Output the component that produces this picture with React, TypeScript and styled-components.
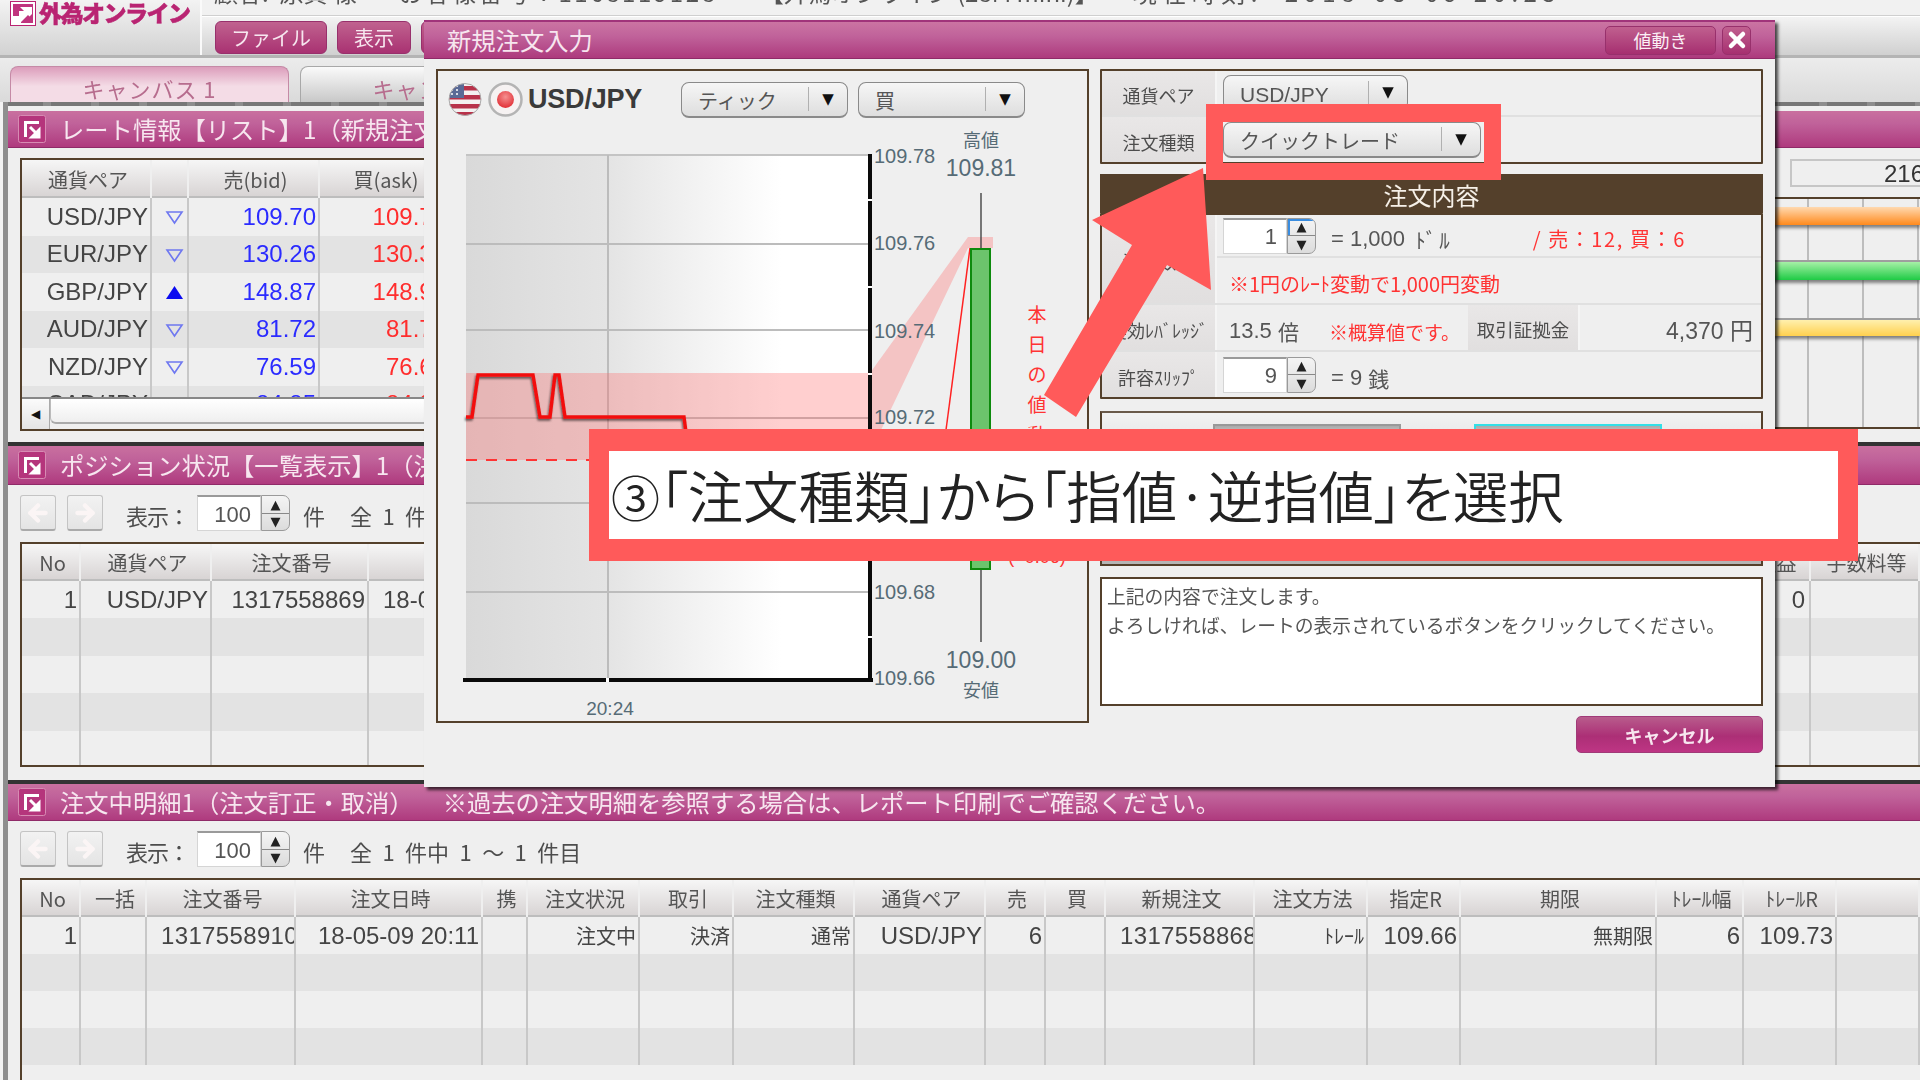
import React from "react";
import styled, { createGlobalStyle } from "styled-components";
import { ArrowLeft, ArrowRight, X } from "lucide-react";

const SANS = `"Liberation Sans", "Noto Sans CJK JP", sans-serif`;
const CJK = `"Noto Sans CJK JP", "Liberation Sans", sans-serif`;
const BROWN = "#54402b";

const Global = createGlobalStyle`
  html, body { margin: 0; padding: 0; background: #efefef; }
  * { box-sizing: border-box; }
  body { font-family: ${SANS}; color: #4a4a4a; }
`;

const Page = styled.div`
  position: relative;
  width: 1920px;
  height: 1080px;
  overflow: hidden;
  background: #efefef;
`;
const Screen = styled.div`
  position: relative;
  width: 1920px;
  height: 1080px;
  filter: blur(0.45px);
`;

/* ---------- header ---------- */
const TopBar = styled.header`
  display: grid;
  grid-template-columns: 202px 1fr;
  height: 58px;
  border-bottom: 3px solid #b4b4b4;
`;
const LogoCell = styled.div`
  display: flex;
  align-items: flex-start;
  gap: 3px;
  padding: 1px 0 0 10px;
  background: linear-gradient(#f3f3f3, #d2d2d2);
  border-right: 2px solid #fafafa;
`;
const LogoText = styled.span`
  font: 900 23px/23px ${CJK};
  color: #b92472;
  letter-spacing: -1.5px;
  -webkit-text-stroke: 0.5px #b92472;
`;
const HeaderRight = styled.div`
  display: flex;
  flex-direction: column;
`;
const InfoLine = styled.div`
  height: 16px;
  overflow: hidden;
  background: #f1f1f1;
  border-bottom: 1px solid #cfcfcf;
  padding-left: 12px;
`;
const InfoText = styled.div`
  display: flex;
  margin-top: -22px;
  font: 24px/28px ${CJK};
  color: #555;
  white-space: pre;
  gap: 42px;
`;
const InfoItem = styled.span<{ $track?: number; $left?: number }>`
  letter-spacing: ${(p) => p.$track ?? 0}px;
  margin-left: ${(p) => p.$left ?? 0}px;
`;
const MenuRow = styled.nav`
  flex: 1;
  display: flex;
  gap: 10px;
  padding: 4px 0 0 13px;
  background: linear-gradient(#f3f3f3, #d0d0d0);
  border-top: 1px solid #fff;
`;
const MenuButton = styled.button<{ $w: number }>`
  width: ${(p) => p.$w}px;
  height: 33px;
  padding: 0;
  border: 1px solid #98306c;
  border-radius: 6px;
  background: linear-gradient(#c0628f, #a93272);
  color: #f7e7ef;
  font: 20px/30px ${CJK};
`;

/* ---------- tabs ---------- */
const TabRow = styled.div`
  display: flex;
  align-items: flex-end;
  gap: 11px;
  height: 44px;
  padding-left: 10px;
  background: linear-gradient(#ececec, #dadada);
`;
const Tab = styled.div<{ $active?: boolean }>`
  width: 279px;
  height: 36px;
  border: 1px solid ${(p) => (p.$active ? "#c58aa6" : "#a8a8a8")};
  border-bottom: 0;
  border-radius: 8px 8px 0 0;
  background: ${(p) =>
    p.$active ? "linear-gradient(#dc9dbb, #f4dce6 55%)" : "linear-gradient(#fafafa, #c8c8c8)"};
  color: #b76d8e;
  font: 22px/42px ${CJK};
  text-align: center;
  letter-spacing: 1px;
`;

/* ---------- canvas and panels ---------- */
const Canvas = styled.main`
  height: 978px;
  padding: 9px 0 0 5px;
  background: #efefef;
  border-left: 3px solid #f3f3f3;
  box-shadow: inset 5px 0 0 #8e8e8e;
  background-image: repeating-linear-gradient(90deg, #777 0 40px, #8d8d8d 40px 48px);
  background-size: 100% 4px;
  background-repeat: no-repeat;
`;
const Panel = styled.section<{ $h: number }>`
  height: ${(p) => p.$h}px;
  display: flex;
  flex-direction: column;
  background: #efefef;
`;
const Divider = styled.div<{ $h: number }>`
  height: ${(p) => p.$h}px;
  background: #333;
`;
const TitleBar = styled.div<{ $h?: number }>`
  flex: none;
  height: ${(p) => p.$h ?? 37}px;
  display: flex;
  align-items: center;
  gap: 14px;
  padding-left: 10px;
  background: linear-gradient(#c9709f, #c0629a 35%, #af3a7e);
  border-bottom: 1px solid #8f2a68;
  color: #f7e6ef;
  font: 24.3px/1 ${CJK};
  white-space: nowrap;
`;
const Notice = styled.span`
  margin-left: 15px;
`;
const PanelBody = styled.div`
  flex: 1;
  min-height: 0;
  display: flex;
  flex-direction: column;
  gap: 11px;
  padding: 10px 0 0 12px;
`;
const RateBody = styled.div`
  flex: 1;
  min-height: 0;
  display: flex;
  justify-content: space-between;
  padding: 10px 0 0 12px;
`;

/* ---------- tables ---------- */
const TableFrame = styled.div<{ $w?: number; $h: number }>`
  position: relative;
  width: ${(p) => (p.$w ? `${p.$w}px` : "100%")};
  height: ${(p) => p.$h}px;
  border: 2px solid ${BROWN};
  border-right: ${(p) => (p.$w ? `2px solid ${BROWN}` : "0")};
  overflow: hidden;
  flex: none;
`;
const HeadRow = styled.div<{ $cols: string; $h: number }>`
  display: grid;
  grid-template-columns: ${(p) => p.$cols};
  height: ${(p) => p.$h}px;
`;
const HeadCell = styled.div`
  display: flex;
  align-items: center;
  justify-content: center;
  margin-right: 2px;
  padding: 3px 0 0 4px;
  background: linear-gradient(#f6f6f6, #d8d4d4);
  border-bottom: 2px solid #bdbdbd;
  font: 20px/1 ${CJK};
  color: #555;
  white-space: nowrap;
  overflow: hidden;
`;
const DataRow = styled.div<{ $cols: string; $h: number; $alt?: boolean }>`
  display: grid;
  grid-template-columns: ${(p) => p.$cols};
  height: ${(p) => p.$h}px;
  background: ${(p) => (p.$alt ? "#e3e3e3" : "#efefef")};
`;
const Cell = styled.div<{ $align?: string; $cjk?: boolean; $color?: string; $pad?: number }>`
  display: flex;
  align-items: center;
  justify-content: ${(p) => (p.$align === "left" ? "flex-start" : p.$align === "center" ? "center" : "flex-end")};
  padding: 0 ${(p) => (p.$align === "left" ? 0 : p.$pad ?? 2)}px 0 ${(p) => (p.$align === "left" ? p.$pad ?? 14 : 0)}px;
  border-right: 2px solid #c8c8c8;
  font: ${(p) => (p.$cjk ? `20px/1 ${CJK}` : `24px/1 ${SANS}`)};
  color: ${(p) => p.$color ?? "#444"};
  white-space: nowrap;
  overflow: hidden;
`;
const Rate = styled(Cell)`
  font-size: 24px;
`;
const TrendCell = styled(Cell)`
  padding: 2px 0 0 10px;
  justify-content: center;
`;
const IdCell = styled(Cell)`
  letter-spacing: 0.35px;
`;
const ScrollTrack = styled.div`
  position: absolute;
  left: 0;
  right: 0;
  bottom: 0;
  height: 32px;
  display: flex;
  border-top: 2px solid #888;
  background: #efefef;
`;
const ScrollArrow = styled.div`
  width: 28px;
  display: flex;
  align-items: center;
  justify-content: center;
  background: linear-gradient(#fbfbfb, #e4e4e4);
  border-right: 1px solid #aaa;
  font: 12px/1 "DejaVu Sans", sans-serif;
  color: #111;
`;
const ScrollThumb = styled.div`
  flex: 1;
  margin-bottom: 5px;
  border-radius: 0 0 0 6px;
  border-left: 1px solid #bbb;
  border-bottom: 2px solid #aaa;
  background: linear-gradient(#fff, #efefef);
`;

/* ---------- toolbar ---------- */
const Toolbar = styled.div`
  display: flex;
  align-items: center;
  height: 36px;
  font: 22px/1 ${CJK};
  color: #4d4d4d;
`;
const NavButton = styled.div`
  width: 36px;
  height: 36px;
  margin-right: 11px;
  display: flex;
  align-items: center;
  justify-content: center;
  background: linear-gradient(#f2f2f2, #e4e4e4);
  border: 1px solid #c4c4c4;
  border-bottom: 2px solid #aaa;
  border-radius: 3px;
  color: #fbf5f5;
`;
const ShowLabel = styled.span`
  flex: none;
  width: 71px;
  margin-left: 12px;
  padding-top: 3px;
  white-space: nowrap;
  letter-spacing: -1px;
`;
const BarText = styled.span<{ $left: number; $words?: number }>`
  margin-left: ${(p) => p.$left}px;
  padding-top: 3px;
  white-space: pre;
  word-spacing: ${(p) => p.$words ?? 0}px;
`;
const SpinnerWrap = styled.div`
  display: flex;
  width: 93px;
  height: 36px;
`;
const SpinnerInput = styled.div`
  width: 64px;
  display: flex;
  align-items: center;
  justify-content: flex-end;
  padding: 2px 9px 0 0;
  background: #fff;
  border: 1px solid #d5d5d5;
  border-top: 2px solid #9a9a9a;
  font: 22px/1 ${SANS};
  color: #555;
`;
const SpinnerBtns = styled.div`
  width: 29px;
  display: flex;
  flex-direction: column;
  border: 1px solid #9a9a9a;
  border-radius: 0 7px 7px 0;
  overflow: hidden;
  background: linear-gradient(#f4f4f4, #dcdcdc);
`;
const SpinnerBtn = styled.div<{ $active?: boolean }>`
  flex: 1;
  display: flex;
  align-items: center;
  justify-content: center;
  font: 13px/1 "DejaVu Sans", sans-serif;
  color: #222;
  box-shadow: ${(p) => (p.$active ? "inset 0 2px 0 #3a8de0, inset 2px 0 0 #3a8de0" : "none")};
  & + & { border-top: 1px solid #888; }
`;

function Spinner({ value, active }: { value: string; active?: boolean }) {
  return (
    <SpinnerWrap>
      <SpinnerInput>{value}</SpinnerInput>
      <SpinnerBtns>
        <SpinnerBtn $active={active}>▲</SpinnerBtn>
        <SpinnerBtn>▼</SpinnerBtn>
      </SpinnerBtns>
    </SpinnerWrap>
  );
}

function PanelIcon() {
  return (
    <svg width="28" height="28" viewBox="0 0 28 28">
      <rect x="0.5" y="0.5" width="27" height="27" rx="2" fill="#b5357c" stroke="#d78bb3" />
      <path d="M6 6h15v3h-12v13h-3z" fill="#fff" />
      <path d="M12 12l8 8M21 15v7h-7z" stroke="#fff" strokeWidth="3" fill="#fff" />
    </svg>
  );
}

function ListBar({ total }: { total: string }) {
  return (
    <Toolbar>
      <NavButton><ArrowLeft size={26} strokeWidth={4} /></NavButton>
      <NavButton><ArrowRight size={26} strokeWidth={4} /></NavButton>
      <ShowLabel>表示：</ShowLabel>
      <Spinner value="100" />
      <BarText $left={13}>件</BarText>
      <BarText $left={25} $words={5.5}>{total}</BarText>
    </Toolbar>
  );
}

/* ---------- rate side (mostly behind the dialog) ---------- */
const SidePane = styled.div`
  width: 800px;
  display: flex;
  flex-direction: column;
  align-items: flex-end;
  margin-top: 1px;
`;
const AmountField = styled.div`
  width: 130px;
  height: 28px;
  padding-left: 92px;
  border: 2px solid #c6c6c6;
  border-right: 0;
  font: 24px/25px ${SANS};
  color: #333;
  overflow: hidden;
`;
const TimeChart = styled.div`
  width: 100%;
  height: 232px;
  margin-top: 10px;
  padding-top: 8px;
  border-top: 2px solid ${BROWN};
  border-bottom: 2px solid ${BROWN};
  background-color: #efefef;
  background-image: linear-gradient(90deg, #bdbdbd 0 2px, transparent 2px);
  background-size: 55px 100%;
  background-position: 27px 0;
  display: flex;
  flex-direction: column;
`;
const Lane = styled.div<{ $h: number }>`
  height: ${(p) => p.$h}px;
  border-bottom: 2px solid #9f9f9f;
`;
const Bar = styled.div<{ $from: string; $to: string; $h: number }>`
  height: ${(p) => p.$h}px;
  background: linear-gradient(${(p) => p.$from}, ${(p) => p.$to});
  box-shadow: 0 3px 3px rgba(70, 70, 70, 0.65);
`;

/* ---------- dialog ---------- */
const Dialog = styled.div`
  position: absolute;
  left: 424px;
  top: 20px;
  width: 1351px;
  height: 767px;
  display: flex;
  flex-direction: column;
  background: #efefef;
  box-shadow: 3px 3px 3px rgba(0, 0, 0, 0.7);
`;
const DialogTitle = styled.div`
  flex: none;
  height: 39px;
  display: flex;
  align-items: center;
  padding: 0 24px 0 23px;
  background: linear-gradient(#cb74a2, #c0629a 40%, #ad3a7d);
  border-top: 2px solid #a0347a;
  border-bottom: 1px solid #8f2a68;
  color: #f7e6ef;
  font: 24.3px/1 ${CJK};
`;
const TitleButton = styled.div<{ $w: number }>`
  width: ${(p) => p.$w}px;
  height: 29px;
  margin-left: 6px;
  display: flex;
  align-items: center;
  justify-content: center;
  border: 1px solid #98306c;
  border-radius: 5px;
  background: linear-gradient(#c0608f, #a62f70);
  font: 18px/1 ${CJK};
  color: #fbeff5;
  &:first-of-type { margin-left: auto; }
`;
const DialogBody = styled.div`
  flex: 1;
  display: grid;
  grid-template-columns: 653px 663px;
  gap: 11px;
  padding: 10px 12px 0;
  align-items: start;
`;
const ChartBox = styled.div`
  height: 654px;
  border: 2px solid ${BROWN};
  background: #efefef;
`;
const ChartHead = styled.div`
  display: flex;
  align-items: center;
  height: 37px;
  margin-top: 10px;
  padding-left: 10px;
`;
const PairName = styled.span`
  width: 153px;
  margin-left: 5px;
  font: bold 27px/1 ${SANS};
  letter-spacing: -0.2px;
  color: #3a3a3a;
`;
const SelectBox = styled.div<{ $w: number; $h?: number }>`
  width: ${(p) => p.$w}px;
  height: ${(p) => p.$h ?? 36}px;
  margin-right: 10px;
  display: flex;
  align-items: center;
  padding-left: 16px;
  border: 1px solid #8a8a8a;
  border-bottom-width: 2px;
  border-radius: 8px;
  background: linear-gradient(#f6f6f6, #dedede);
  font: 20px/1 ${CJK};
  color: #555;
  flex: none;
`;
const SelectLabel = styled.span<{ $latin?: boolean }>`
  flex: 1;
  padding-top: 3px;
  white-space: nowrap;
  font-family: ${(p) => (p.$latin ? SANS : CJK)};
  font-size: ${(p) => (p.$latin ? "21px" : "20px")};
`;
const SelectArrow = styled.span`
  width: 39px;
  height: 24px;
  display: flex;
  align-items: center;
  justify-content: center;
  border-left: 1px solid #b0b0b0;
  font: 15px/1 "DejaVu Sans", sans-serif;
  color: #111;
`;
const ChartSvg = styled.svg`
  display: block;
  margin-top: 2px;
`;
const SideColumn = styled.div`
  display: flex;
  flex-direction: column;
`;
const FormBox = styled.div`
  border: 2px solid ${BROWN};
  border-radius: 1px;
`;
const FormRow = styled.div<{ $h: number }>`
  display: flex;
  height: ${(p) => p.$h}px;
  border-bottom: 2px solid #e0e0e0;
  &:last-child { border-bottom: 0; }
`;
const RowLabel = styled.div<{ $w?: number; $size?: number }>`
  flex: none;
  width: ${(p) => p.$w ?? 115}px;
  display: flex;
  align-items: center;
  justify-content: center;
  padding-top: 4px;
  background: linear-gradient(#e9e7e7, #e1dfdf);
  border-right: 2px solid #f5f5f5;
  font: ${(p) => p.$size ?? 18}px/1 ${CJK};
  color: #4d4d4d;
  white-space: nowrap;
`;
const RowValue = styled.div<{ $pad?: number; $w?: number }>`
  flex: ${(p) => (p.$w ? "none" : 1)};
  width: ${(p) => (p.$w ? `${p.$w}px` : "auto")};
  display: flex;
  align-items: center;
  padding-left: ${(p) => p.$pad ?? 6}px;
  font: 21px/1 ${CJK};
  color: #555;
  white-space: pre;
  & > span { padding-top: 7px; }
`;
const Merged = styled.div`
  display: flex;
  border-bottom: 2px solid #e0e0e0;
`;
const MergedRows = styled.div`
  flex: 1;
`;
const Numeric = styled.span`
  font: 22px/1 ${SANS};
  margin-left: 15px;
`;
const UnitText = styled.span`
  margin-left: 4px;
  letter-spacing: 3px;
`;
const RedText = styled.span<{ $left?: number; $size?: number; $track?: number }>`
  color: #f33;
  margin-left: ${(p) => p.$left ?? 0}px;
  font-size: ${(p) => p.$size ?? 20}px;
  letter-spacing: ${(p) => p.$track ?? 0}px;
`;
const LatinValue = styled.span`
  font: 22px/1 ${SANS};
`;
const TotalValue = styled.div`
  flex: 1;
  display: flex;
  justify-content: flex-end;
  align-items: center;
  padding: 7px 8px 0 0;
  font: 23px/1 ${SANS};
  color: #555;
`;
const ContentBar = styled.div`
  height: 39px;
  margin-top: 10px;
  padding-top: 2px;
  display: flex;
  align-items: center;
  justify-content: center;
  background: ${BROWN};
  color: #f6f0e8;
  font: 24px/1 ${CJK};
`;
const TradeBox = styled.div`
  height: 155px;
  margin-top: 12px;
  display: flex;
  gap: 73px;
  padding: 11px 0 0 111px;
  border: 2px solid ${BROWN};
  border-top-color: #6a5a4a;
  background: linear-gradient(#f2f2f2, #b4b4b4);
`;
const TradeButton = styled.div<{ $focus?: boolean }>`
  width: 188px;
  height: 100px;
  background: linear-gradient(#aaa, #fff 22%);
  border: 2px solid ${(p) => (p.$focus ? "#33dfe6" : "#999")};
`;
const MessageBox = styled.div`
  height: 129px;
  margin-top: 11px;
  padding: 2px 5px;
  background: #fff;
  border: 2px solid ${BROWN};
  font: 18.8px/29px ${CJK};
  color: #555;
  white-space: nowrap;
`;
const CancelRow = styled.div`
  display: flex;
  justify-content: flex-end;
  margin-top: 10px;
`;
const CancelButton = styled.div`
  width: 187px;
  height: 37px;
  display: flex;
  align-items: center;
  justify-content: center;
  border: 1px solid #a03a78;
  border-radius: 5px;
  background: linear-gradient(#b85c8c, #ac2f76 55%, #be3584);
  color: #f7e6ef;
  font: bold 18px/1 ${CJK};
`;

/* ---------- tutorial overlay ---------- */
const Highlight = styled.div`
  position: absolute;
  left: 1206px;
  top: 104px;
  width: 295px;
  height: 76px;
  border: solid #ff5a5a;
  border-width: 18px 17px 17px;
`;
const ArrowSvg = styled.svg`
  position: absolute;
  left: 1030px;
  top: 160px;
`;
const Banner = styled.div`
  position: absolute;
  left: 589px;
  top: 429px;
  width: 1269px;
  height: 132px;
  display: flex;
  align-items: center;
  padding-left: 2px;
  background: #fff;
  border: solid #ff5a5a;
  border-width: 22px 20px;
  font: 350 55.4px/1 "Noto Sans CJK JP", sans-serif;
  font-feature-settings: "palt";
  color: #222;
  white-space: nowrap;
`;
const CircleNumber = styled.span`
  font-size: 49px;
`;

/* ---------- data ---------- */
const rateCols = "130px 37px 131px 130px 1fr";
const rates: [string, boolean, string, string][] = [
  ["USD/JPY", false, "109.70", "109.76"],
  ["EUR/JPY", false, "130.26", "130.32"],
  ["GBP/JPY", true, "148.87", "148.97"],
  ["AUD/JPY", false, "81.72", "81.78"],
  ["NZD/JPY", false, "76.59", "76.67"],
  ["CAD/JPY", false, "84.85", "84.93"],
];
const posCols = "59px 131px 157px 187px 1144px 111px 1fr";
const orderCols =
  "59px 66px 149px 187px 45px 112px 94px 121px 131px 60px 60px 149px 113px 93px 196px 87px 93px 1fr";
const orderHead = ["No", "一括", "注文番号", "注文日時", "携", "注文状況", "取引", "注文種類", "通貨ペア", "売", "買", "新規注文", "注文方法", "指定R", "期限", "ﾄﾚｰﾙ幅", "ﾄﾚｰﾙR", ""];

function Triangle({ up }: { up: boolean }) {
  return (
    <svg width="19" height="15" viewBox="0 0 19 15">
      {up ? (
        <path d="M9.5 1L18 14H1z" fill="#0b0bf0" />
      ) : (
        <path d="M2 2h15L9.5 13z" fill="none" stroke="#6f78f0" strokeWidth="1.6" />
      )}
    </svg>
  );
}

function Flag() {
  return (
    <svg width="34" height="35" viewBox="0 0 34 35">
      <defs>
        <clipPath id="flagClip"><circle cx="17" cy="17.5" r="16" /></clipPath>
      </defs>
      <g clipPath="url(#flagClip)">
        <rect width="34" height="35" fill="#f4f0f0" />
        {[4, 13, 22, 30].map((y) => (
          <rect key={y} x="0" y={y} width="34" height="4.5" fill="#b8324a" />
        ))}
        <rect x="0" y="0" width="16" height="16" fill="#5a6a96" />
        <path d="M3 4h2M8 4h2M3 8h2M8 8h2M3 12h2M8 12h2" stroke="#fff" strokeWidth="1.6" />
      </g>
      <circle cx="17" cy="17.5" r="16" fill="none" stroke="#aaa" />
    </svg>
  );
}

const BadgeSvg = styled.svg`
  margin-left: 6px;
`;

function JapanBadge() {
  return (
    <BadgeSvg width="35" height="35" viewBox="0 0 35 35">
      <defs>
        <radialGradient id="jpDot" cx="50%" cy="35%" r="70%">
          <stop offset="0" stopColor="#f59090" />
          <stop offset="1" stopColor="#e02830" />
        </radialGradient>
      </defs>
      <circle cx="17.5" cy="17.5" r="16" fill="#f6f2f2" stroke="#b4b4b4" strokeWidth="2.5" />
      <circle cx="17.5" cy="17.5" r="8.5" fill="url(#jpDot)" />
    </BadgeSvg>
  );
}

function Chart() {
  const ys = [244, 330, 418, 503, 592];
  const ticks = [
    ["109.78", 163],
    ["109.76", 250],
    ["109.74", 338],
    ["109.72", 424],
    ["109.68", 599],
    ["109.66", 685],
  ] as const;
  const textProps = { fontFamily: SANS, fill: "#566b76" };
  const jpProps = { fontFamily: CJK, fill: "#566b76", textAnchor: "middle" as const };
  return (
    <ChartSvg width={649} height={600} viewBox="438 120 649 600">
      <defs>
        <linearGradient id="plotBg" x1="0" x2="1" y1="0" y2="0">
          <stop offset="0" stopColor="#d9d9d9" />
          <stop offset="0.35" stopColor="#e4e4e4" />
          <stop offset="0.5" stopColor="#eeeeee" />
          <stop offset="0.78" stopColor="#ffffff" />
          <stop offset="1" stopColor="#ffffff" />
        </linearGradient>
        <filter id="lineShadow" x="-5%" y="-20%" width="110%" height="150%">
          <feDropShadow dx="-1" dy="2" stdDeviation="1" floodColor="#000" floodOpacity="0.55" />
        </filter>
      </defs>
      <rect x="466" y="155" width="404" height="524" fill="url(#plotBg)" />
      <rect x="466" y="154" width="404" height="2" fill="#c4c4c4" />
      {ys.map((y) => (
        <rect key={y} x="466" y={y - 1} width="404" height="2" fill="#bcbcbc" />
      ))}
      <rect x="607" y="155" width="2" height="524" fill="#bcbcbc" />
      <polygon
        points="466,373 870,373 968,237 993,237 993,248 968,248 881,430 870,460 466,460"
        fill="#ff6a6a"
        fillOpacity="0.32"
      />
      <path d="M466 460H700" stroke="#f33" strokeWidth="2" strokeDasharray="11 9" />
      <path
        d="M466 417H472L478 375H533L540 417H550L555 375H559L565 417H684L687 440"
        fill="none"
        stroke="#f20d0d"
        strokeWidth="3.4"
        filter="url(#lineShadow)"
      />
      <rect x="868" y="154" width="4" height="528" fill="#0a0a0a" />
      <rect x="463" y="678" width="410" height="4" fill="#0a0a0a" />
      <rect x="606" y="678" width="3" height="4" fill="#fff" />
      {[199, 286, 373, 636].map((y) => (
        <rect key={y} x="868" y={y} width="4" height="2" fill="#fff" />
      ))}
      {ticks.map(([t, y]) => (
        <text key={t} x="874" y={y} fontSize="20" {...textProps}>{t}</text>
      ))}
      <text x="981" y="147" fontSize="18" {...jpProps}>高値</text>
      <text x="981" y="176" fontSize="23" textAnchor="middle" {...textProps}>109.81</text>
      <path d="M981 193V642" stroke="#444" strokeWidth="1.4" />
      <path d="M946 430L970 248" stroke="#f22" strokeWidth="1.5" fill="none" />
      <rect x="971" y="249" width="19" height="320" fill="#6cc46c" stroke="#0d8a0d" strokeWidth="2" />
      <text x="981" y="668" fontSize="23" textAnchor="middle" {...textProps}>109.00</text>
      <text x="981" y="697" fontSize="18" {...jpProps}>安値</text>
      {["本", "日", "の", "値", "動"].map((c, i) => (
        <text key={c} x="1037" y={322 + i * 30} fontSize="19" textAnchor="middle" fontFamily={CJK} fill="#f33">{c}</text>
      ))}
      <text x="1037" y="563" fontSize="18" textAnchor="middle" fontFamily={SANS} fill="#f33">(+0.06)</text>
      <text x="610" y="715" fontSize="19" textAnchor="middle" {...textProps}>20:24</text>
    </ChartSvg>
  );
}

export default function App() {
  return (
    <Page>
      <Global />
      <Screen>
        <TopBar>
          <LogoCell>
            <svg width="26" height="25" viewBox="0 0 26 25">
              <rect x="0.5" y="0.5" width="25" height="24" fill="#fff" stroke="#b92472" />
              <path d="M3 3h20v19H3z" fill="#c0347e" />
              <path d="M3 22V15h6v-5h5l-4-4h12v12l-4-4-7 7v1z" fill="#fff" />
              <path d="M13 22l9-9v9z" fill="#c0347e" />
            </svg>
            <LogoText>外為オンライン</LogoText>
          </LogoCell>
          <HeaderRight>
            <InfoLine>
              <InfoText>
                <InfoItem>顧客:  原賀 様</InfoItem>
                <InfoItem $track={2.6}>お客様番号：1168119128</InfoItem>
                <InfoItem>【外為オンライン (28M mini)】</InfoItem>
                <InfoItem $track={5.5} $left={-8}>現在時刻:  2018-05-09 20:25</InfoItem>
              </InfoText>
            </InfoLine>
            <MenuRow>
              <MenuButton $w={112}>ファイル</MenuButton>
              <MenuButton $w={74}>表示</MenuButton>
              <MenuButton $w={112} />
            </MenuRow>
          </HeaderRight>
        </TopBar>
        <TabRow>
          <Tab $active>キャンバス 1</Tab>
          <Tab>キャンバス 2</Tab>
        </TabRow>
        <Canvas>
          <Panel $h={331}>
            <TitleBar>
              <PanelIcon />
              レート情報【リスト】1（新規注文）
            </TitleBar>
            <RateBody>
              <TableFrame $w={680} $h={273}>
                <HeadRow $cols={rateCols} $h={38}>
                  <HeadCell>通貨ペア</HeadCell>
                  <HeadCell />
                  <HeadCell>売(bid)</HeadCell>
                  <HeadCell>買(ask)</HeadCell>
                  <HeadCell />
                </HeadRow>
                {rates.map(([pair, up, bid, ask], i) => (
                  <DataRow key={pair} $cols={rateCols} $h={37.5} $alt={i % 2 === 1}>
                    <Cell>{pair}</Cell>
                    <TrendCell><Triangle up={up} /></TrendCell>
                    <Rate $color="#2b2bff">{bid}</Rate>
                    <Rate $color="#ff2d2d">{ask}</Rate>
                    <Cell />
                  </DataRow>
                ))}
                <ScrollTrack>
                  <ScrollArrow>◀</ScrollArrow>
                  <ScrollThumb />
                </ScrollTrack>
              </TableFrame>
              <SidePane>
                <AmountField>2165</AmountField>
                <TimeChart>
                  <Bar $from="#ffd9b0" $to="#ff8a1c" $h={18} />
                  <Lane $h={37} />
                  <Bar $from="#a6f0a6" $to="#1fcb45" $h={18} />
                  <Lane $h={40} />
                  <Bar $from="#fff0ae" $to="#ffd04e" $h={16} />
                </TimeChart>
              </SidePane>
            </RateBody>
          </Panel>
          <Divider $h={4} />
          <Panel $h={334}>
            <TitleBar $h={39}>
              <PanelIcon />
              ポジション状況【一覧表示】1（決済注文）
            </TitleBar>
            <PanelBody>
              <ListBar total="全 1 件中 1 ～ 1 件目" />
              <TableFrame $h={225}>
                <HeadRow $cols={posCols} $h={37}>
                  <HeadCell>No</HeadCell>
                  <HeadCell>通貨ペア</HeadCell>
                  <HeadCell>注文番号</HeadCell>
                  <HeadCell>約定日時</HeadCell>
                  <HeadCell />
                  <HeadCell>評価損益</HeadCell>
                  <HeadCell>手数料等</HeadCell>
                </HeadRow>
                {[0, 1, 2, 3, 4].map((i) => (
                  <DataRow key={i} $cols={posCols} $h={37.4} $alt={i % 2 === 1}>
                    <Cell>{i === 0 ? "1" : ""}</Cell>
                    <Cell>{i === 0 ? "USD/JPY" : ""}</Cell>
                    <Cell>{i === 0 ? "1317558869" : ""}</Cell>
                    <Cell $align="left">{i === 0 ? "18-05-09 20:11" : ""}</Cell>
                    <Cell />
                    <Cell $pad={4}>{i === 0 ? "0" : ""}</Cell>
                    <Cell />
                  </DataRow>
                ))}
              </TableFrame>
            </PanelBody>
          </Panel>
          <Divider $h={4} />
          <Panel $h={298}>
            <TitleBar>
              <PanelIcon />
              注文中明細1（注文訂正・取消）
              <Notice>※過去の注文明細を参照する場合は、レポート印刷でご確認ください。</Notice>
            </TitleBar>
            <PanelBody>
              <ListBar total="全 1 件中 1 ～ 1 件目" />
              <TableFrame $h={220}>
                <HeadRow $cols={orderCols} $h={37}>
                  {orderHead.map((h, i) => (
                    <HeadCell key={i}>{h}</HeadCell>
                  ))}
                </HeadRow>
                <DataRow $cols={orderCols} $h={37}>
                  <Cell>1</Cell>
                  <Cell />
                  <IdCell $align="left">1317558910</IdCell>
                  <Cell>18-05-09 20:11</Cell>
                  <Cell />
                  <Cell $cjk>注文中</Cell>
                  <Cell $cjk>決済</Cell>
                  <Cell $cjk>通常</Cell>
                  <Cell>USD/JPY</Cell>
                  <Cell>6</Cell>
                  <Cell />
                  <IdCell $align="left">1317558868</IdCell>
                  <Cell $cjk>ﾄﾚｰﾙ</Cell>
                  <Cell>109.66</Cell>
                  <Cell $cjk>無期限</Cell>
                  <Cell>6</Cell>
                  <Cell>109.73</Cell>
                  <Cell />
                </DataRow>
                {[1, 2, 3].map((i) => (
                  <DataRow key={i} $cols={orderCols} $h={37} $alt={i % 2 === 1}>
                    {orderHead.map((_, j) => (
                      <Cell key={j} />
                    ))}
                  </DataRow>
                ))}
              </TableFrame>
            </PanelBody>
          </Panel>
        </Canvas>

        <Dialog>
          <DialogTitle>
            新規注文入力
            <TitleButton $w={111}>値動き</TitleButton>
            <TitleButton $w={29}><X size={24} strokeWidth={4.5} color="#fff" /></TitleButton>
          </DialogTitle>
          <DialogBody>
            <ChartBox>
              <ChartHead>
                <Flag />
                <JapanBadge />
                <PairName>USD/JPY</PairName>
                <SelectBox $w={167}>
                  <SelectLabel>ティック</SelectLabel>
                  <SelectArrow>▼</SelectArrow>
                </SelectBox>
                <SelectBox $w={167}>
                  <SelectLabel>買</SelectLabel>
                  <SelectArrow>▼</SelectArrow>
                </SelectBox>
              </ChartHead>
              <Chart />
            </ChartBox>
            <SideColumn>
              <FormBox>
                <FormRow $h={46}>
                  <RowLabel>通貨ペア</RowLabel>
                  <RowValue>
                    <SelectBox $w={185}>
                      <SelectLabel $latin>USD/JPY</SelectLabel>
                      <SelectArrow>▼</SelectArrow>
                    </SelectBox>
                  </RowValue>
                </FormRow>
                <FormRow $h={45}>
                  <RowLabel>注文種類</RowLabel>
                  <RowValue>
                    <SelectBox $w={258}>
                      <SelectLabel>クイックトレード</SelectLabel>
                      <SelectArrow>▼</SelectArrow>
                    </SelectBox>
                  </RowValue>
                </FormRow>
              </FormBox>
              <ContentBar>注文内容</ContentBar>
              <FormBox>
                <Merged>
                  <RowLabel>注文数量</RowLabel>
                  <MergedRows>
                    <FormRow $h={43}>
                      <RowValue>
                        <Spinner value="1" active />
                        <Numeric>= 1,000 </Numeric>
                        <UnitText>ﾄﾞﾙ</UnitText>
                        <RedText $left={80} $track={1.6}>/ 売：12, 買：6</RedText>
                      </RowValue>
                    </FormRow>
                    <FormRow $h={45}>
                      <RowValue $pad={12}>
                        <RedText>※1円のﾚｰﾄ変動で1,000円変動</RedText>
                      </RowValue>
                    </FormRow>
                  </MergedRows>
                </Merged>
                <FormRow $h={47}>
                  <RowLabel>実効ﾚﾊﾞﾚｯｼﾞ</RowLabel>
                  <RowValue $pad={12} $w={251}>
                    <LatinValue>13.5 </LatinValue>
                    <span>倍</span>
                    <RedText $left={30} $size={19}>※概算値です。</RedText>
                  </RowValue>
                  <RowLabel $w={112} $size={18.5}>取引証拠金</RowLabel>
                  <TotalValue>4,370 円</TotalValue>
                </FormRow>
                <FormRow $h={45}>
                  <RowLabel>許容ｽﾘｯﾌﾟ</RowLabel>
                  <RowValue>
                    <Spinner value="9" />
                    <Numeric>= 9 </Numeric>
                    <span>銭</span>
                  </RowValue>
                </FormRow>
              </FormBox>
              <TradeBox>
                <TradeButton />
                <TradeButton $focus />
              </TradeBox>
              <MessageBox>
                上記の内容で注文します。
                <br />
                よろしければ、レートの表示されているボタンをクリックしてください。
              </MessageBox>
              <CancelRow>
                <CancelButton>キャンセル</CancelButton>
              </CancelRow>
            </SideColumn>
          </DialogBody>
        </Dialog>
      </Screen>

      <Highlight />
      <ArrowSvg width="190" height="270" viewBox="1030 160 190 270">
        <polygon
          points="1203,168 1211,290 1167,265 1076,417 1044,395 1132,245 1092,220"
          fill="#ff5a5a"
        />
      </ArrowSvg>
      <Banner><CircleNumber>③</CircleNumber>「注文種類」から「指値·逆指値」を選択</Banner>
    </Page>
  );
}
